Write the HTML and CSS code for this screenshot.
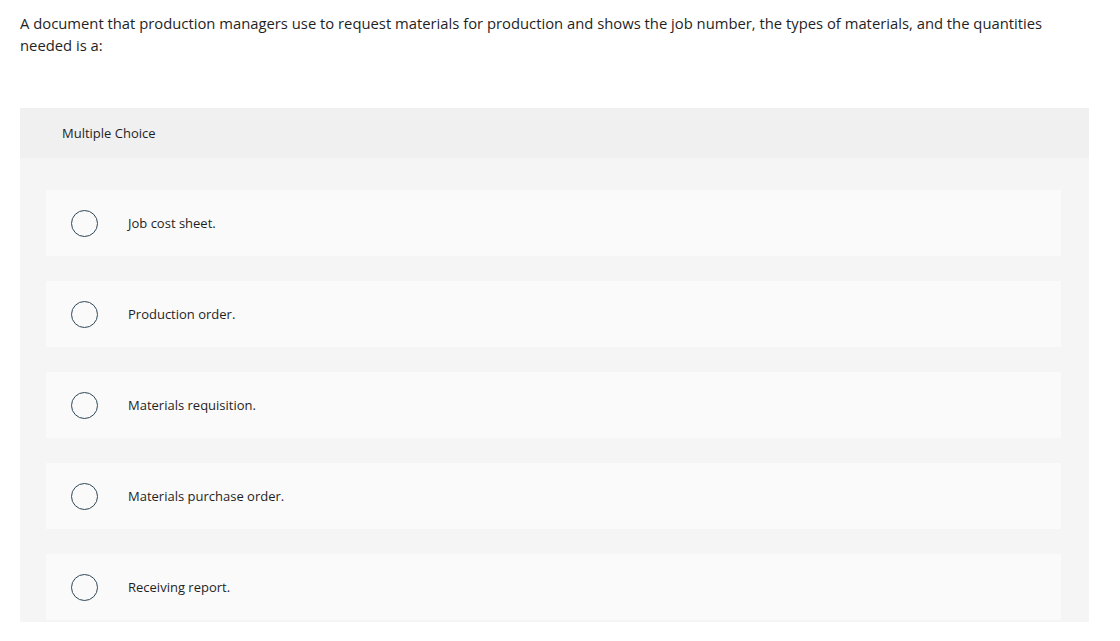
FILE: index.html
```html
<!DOCTYPE html>
<html>
<head>
<meta charset="utf-8">
<link rel="stylesheet" href="styles.css">
</head>
<body>
<div class="page">
  <p class="question">A document that production managers use to request materials for production and shows the job number, the types of materials, and the quantities needed is a:</p>
  <div class="panel">
    <div class="panel-head">Multiple Choice</div>
    <div class="panel-body">
      <div class="choice"><span class="radio"></span><span class="label">Job cost sheet.</span></div>
      <div class="choice"><span class="radio"></span><span class="label">Production order.</span></div>
      <div class="choice"><span class="radio"></span><span class="label">Materials requisition.</span></div>
      <div class="choice"><span class="radio"></span><span class="label">Materials purchase order.</span></div>
      <div class="choice"><span class="radio"></span><span class="label">Receiving report.</span></div>
    </div>
  </div>
</div>
</body>
</html>
```
FILE: styles.css
```css
html, body {
  margin: 0;
  padding: 0;
  background: #ffffff;
}
body {
  font-family: "Open Sans", "Lato", sans-serif;
  color: #1f1f1f;
}
.page {
  padding: 12px 31px 0 20px;
}
.question {
  margin: 0;
  font-size: 14.8px;
  line-height: 22px;
  color: #1f1f1f;
}
.panel {
  margin-top: 52px;
  width: 1069px;
  background: #f5f5f5;
}
.panel-head {
  height: 50px;
  background: #f0f0f0;
  display: flex;
  align-items: center;
  padding-left: 42px;
  font-size: 13px;
  color: #1f1f1f;
}
.panel-body {
  padding: 32px 28px 2px 26px;
  display: flex;
  flex-direction: column;
  gap: 25px;
}
.choice {
  height: 66px;
  background: #fafafa;
  display: flex;
  align-items: center;
  padding-left: 25px;
}
.radio {
  width: 25px;
  height: 25px;
  border: 1.5px solid #2e4756;
  border-radius: 50%;
  flex: none;
}
.label {
  margin-left: 30px;
  font-size: 13px;
  color: #1f1f1f;
}
```
